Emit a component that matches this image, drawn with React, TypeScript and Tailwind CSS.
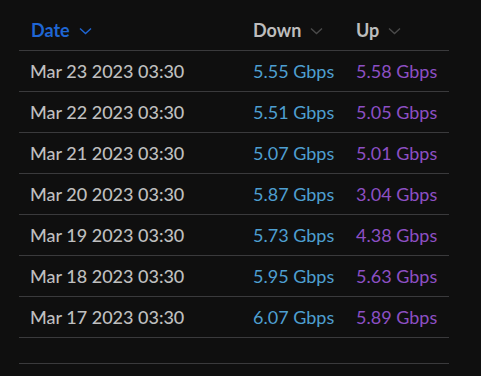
const rows = [
  { date: 'Mar 23 2023 03:30', down: '5.55 Gbps', up: '5.58 Gbps' },
  { date: 'Mar 22 2023 03:30', down: '5.51 Gbps', up: '5.05 Gbps' },
  { date: 'Mar 21 2023 03:30', down: '5.07 Gbps', up: '5.01 Gbps' },
  { date: 'Mar 20 2023 03:30', down: '5.87 Gbps', up: '3.04 Gbps' },
  { date: 'Mar 19 2023 03:30', down: '5.73 Gbps', up: '4.38 Gbps' },
  { date: 'Mar 18 2023 03:30', down: '5.95 Gbps', up: '5.63 Gbps' },
  { date: 'Mar 17 2023 03:30', down: '6.07 Gbps', up: '5.89 Gbps' },
];

function Chevron({ className }: { className: string }) {
  return (
    <svg width="13" height="8" viewBox="0 0 13 8" fill="none" className={className}>
      <path d="M1 1.5 L6.5 6.5 L12 1.5" stroke="currentColor" strokeWidth="1.4" />
    </svg>
  );
}

export default function App() {
  return (
    <div
      className="w-[481px] h-[376px] bg-[#0f0f0f] pt-[10px] pl-[19px] overflow-hidden"
      style={{ fontFamily: 'Lato, "Noto Sans", sans-serif' }}
    >
      <div className="w-[430px]">
        <div className="flex items-center h-[41px] border-b border-[#3a3a3c] text-[18px] font-bold">
          <div className="w-[234px] pl-[12px] flex items-center gap-[9px] text-[#1f66d4]">
            Date
            <Chevron className="mt-[2px]" />
          </div>
          <div className="w-[103px] flex items-center gap-[9px] text-[#bdbdbd]">
            Down
            <Chevron className="mt-[2px] text-[#4a4a4a]" />
          </div>
          <div className="flex-1 flex items-center gap-[9px] text-[#bdbdbd]">
            Up
            <Chevron className="mt-[2px] text-[#4a4a4a]" />
          </div>
        </div>
        {rows.map((r, i) => (
          <div key={i} className="flex items-center h-[41px] border-b border-[#3a3a3c] text-[18px]">
            <div className="w-[234px] pl-[11px] text-[#bfbfbf] font-medium">{r.date}</div>
            <div className="w-[103px] text-[#4e9fd1]">{r.down}</div>
            <div className="flex-1 text-[#8d4fc4]">{r.up}</div>
          </div>
        ))}
        <div className="h-[26px] border-b border-[#3a3a3c]" />
      </div>
    </div>
  );
}
